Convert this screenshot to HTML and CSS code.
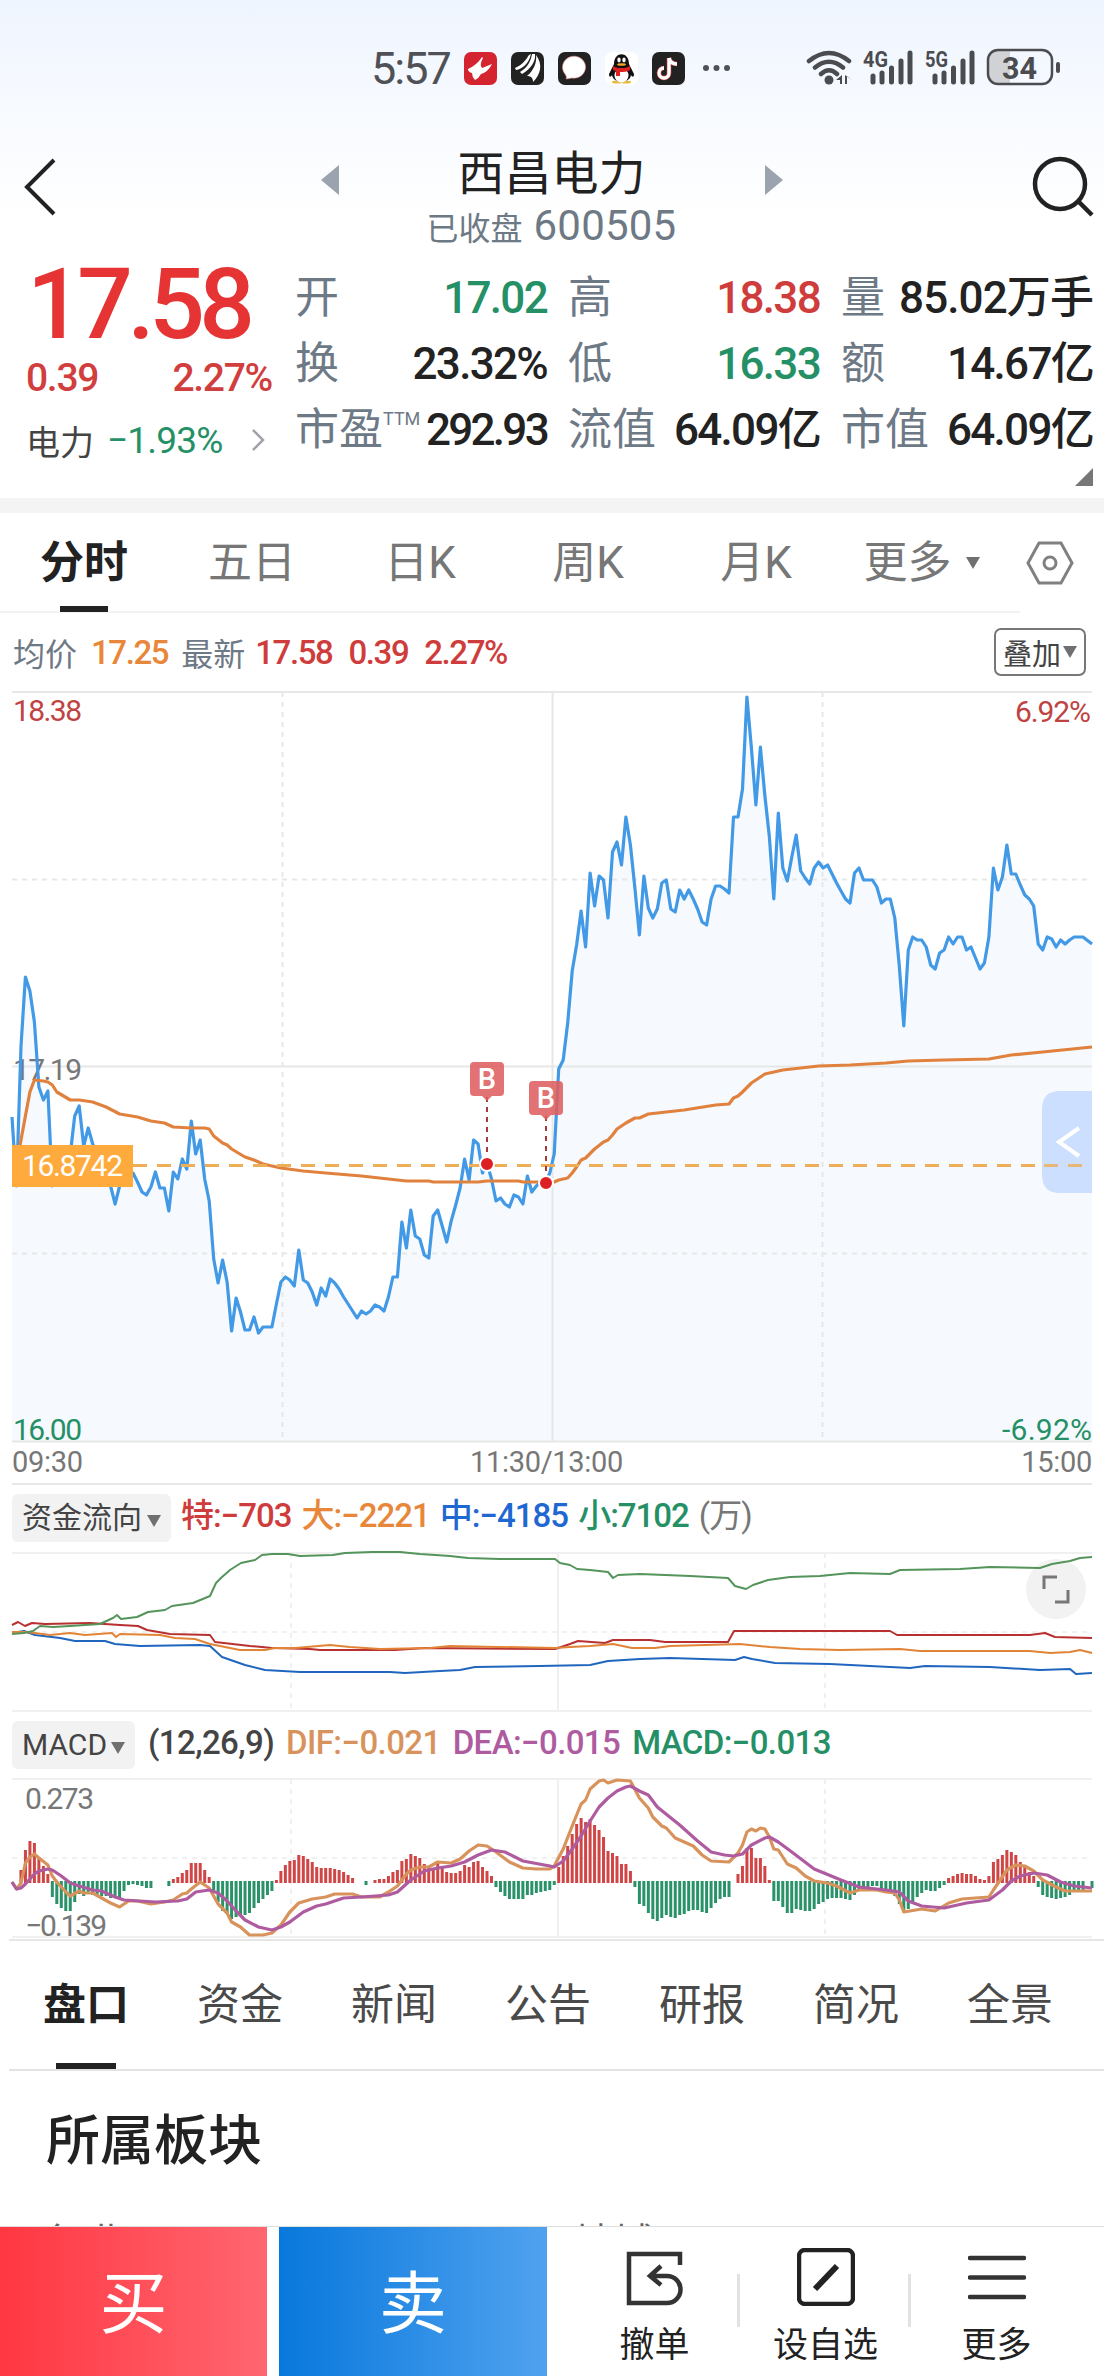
FILE: index.html
```html
<!DOCTYPE html>
<html lang="zh-CN">
<head>
  <meta charset="UTF-8">
  <title>西昌电力 600505</title>
  <link rel="stylesheet" href="styles.css">
</head>
<body>

  <div class="page">
    <div class="top">
      <div class="status-bar">
        <span class="time">5:57</span>
        <div class="apps">
          <svg width="33" height="33" viewBox="0 0 33 33"><rect width="33" height="33" rx="7" fill="#d3242f"/><path d="M4 17Q13 13 18 5L19 6Q15 13 18 16L28 12Q24 20 17 22Q15 26 11 28Q8 25 8 21Q4 20 4 17Z" fill="#fff"/></svg>
          <svg width="33" height="33" viewBox="0 0 33 33"><rect width="33" height="33" rx="7" fill="#222"/><path d="M4 16C11 13 15 8 18 3L20 2C18 11 12 17 5 18ZM9 20C16 16 20 9 21 2L24 2C25 9 20 17 11 22ZM16 24C23 18 26 10 25 3C32 12 30 22 22 30C22 26 20 24 16 24Z" fill="#fff"/></svg>
          <svg width="33" height="33" viewBox="0 0 33 33"><rect width="33" height="33" rx="7" fill="#222"/><path d="M8 27c1-2 0-3-1-5a11.500 11 0 1 1 7 4z" fill="#fff" stroke="#e88" stroke-width=".6"/></svg>
          <svg width="33" height="33" viewBox="0 0 33 33"><rect width="33" height="33" rx="7" fill="#fff"/><ellipse cx="12" cy="30" rx="5" ry="1.500" fill="#e8b93a"/><ellipse cx="21" cy="30" rx="5" ry="1.500" fill="#e8b93a"/><path d="M9 12C9-1 24-1 24 12L29 22C29 26 27 25 26 23C25 32 8 32 7 23C6 25 4 26 4 22Z" fill="#111"/><ellipse cx="16.500" cy="23.500" rx="7" ry="7" fill="#fff"/><path d="M8 14c5 3 12 3 17 0v4c-3 2-7 2-10 2v4h-4v-5l-3-1z" fill="#e02020"/><ellipse cx="14" cy="8" rx="1.700" ry="2.400" fill="#fff"/><ellipse cx="19" cy="8" rx="1.700" ry="2.400" fill="#fff"/><ellipse cx="16.500" cy="12.500" rx="4.500" ry="1.300" fill="#f5a623"/></svg>
          <svg width="33" height="33" viewBox="0 0 33 33"><rect width="33" height="33" rx="7" fill="#222"/><path d="M17 6v15a5 5 0 1 1-5-5M17 6c1 4 4 6 8 6" fill="none" stroke="#e05050" stroke-width="4.500"/><path d="M17 6v15a5 5 0 1 1-5-5M17 6c1 4 4 6 8 6" fill="none" stroke="#fff" stroke-width="3.300"/></svg>
          <svg class="dots" width="28" height="6" viewBox="0 0 28 6"><circle cx="3" cy="3" r="3"/><circle cx="13.500" cy="3" r="3"/><circle cx="24" cy="3" r="3"/></svg>
        </div>
        <svg class="signals" width="256" height="40" viewBox="804 48 256 40">
          <g fill="none" stroke="#4b4c50" stroke-width="4.500" stroke-linecap="round">
            <path d="M809 61Q829 45 849 61M815 67.500Q829 56 843 67.500M821 74Q829 66.500 837 74"/>
            <path stroke-width="5" d="M873 76v6M882 73v9M891.500 68v14M901 61v21M910 53v29M935 76v6M944 73v9M953.500 68v14M963 61v21M972 53v29"/>
          </g>
          <circle cx="829" cy="80" r="4.500" fill="#4b4c50"/>
          <path d="M836 80l6-5v9h-2v-4zM852 80l-5-4v8h-2v-9z" fill="#4b4c50"/>
          <text x="863" y="67" class="net" textLength="25" lengthAdjust="spacingAndGlyphs">4G</text>
          <text x="925" y="67" class="net" textLength="23" lengthAdjust="spacingAndGlyphs">5G</text>
          <path d="M1010 50h-12q-9 0-9 9v15q0 9 9 9h12z" fill="#d0d2d6"/>
          <rect x="988" y="50" width="64" height="34" rx="10" fill="none" stroke="#4b4c50" stroke-width="2.500"/>
          <rect x="1056" y="62" width="4" height="11" rx="2" fill="#4b4c50"/>
          <text x="1002" y="79" class="battery" textLength="35" lengthAdjust="spacingAndGlyphs">34</text>
        </svg>
      </div>

      <div class="header">
        <svg class="back" width="34" height="60" viewBox="0 0 34 60"><path d="M31 3 4 30l27 27"/></svg>
        <div class="stock">
          <svg width="18" height="30" viewBox="0 0 18 30"><path d="M0 15 18 0v30z"/></svg>
          <div class="stock-name">
            <h1>西昌电力</h1>
            <p>已收盘 <span>600505</span></p>
          </div>
          <svg width="18" height="30" viewBox="0 0 18 30"><path d="M18 15 0 0v30z"/></svg>
        </div>
        <svg class="search" width="62" height="62" viewBox="0 0 62 62"><circle cx="28" cy="28" r="25"/><path d="m46 45 14 14"/></svg>
      </div>
    </div>

    <div class="quote">
      <div class="price-box">
        <div class="price">17.58</div>
        <div class="change"><span>0.39</span><span>2.27%</span></div>
        <div class="sector">
          <span>电力</span><b>−1.93%</b>
          <svg width="14" height="24" viewBox="0 0 14 24"><path d="m2 2 10 10L2 22"/></svg>
        </div>
      </div>
      <div class="metrics">
        <div class="metric"><span>开</span><b class="green">17.02</b></div>
        <div class="metric"><span>高</span><b class="red">18.38</b></div>
        <div class="metric wide"><span>量</span><b>85.02万手</b></div>
        <div class="metric"><span>换</span><b>23.32%</b></div>
        <div class="metric"><span>低</span><b class="green">16.33</b></div>
        <div class="metric"><span>额</span><b>14.67亿</b></div>
        <div class="metric tight"><span>市盈<sup>TTM</sup></span><b>292.93</b></div>
        <div class="metric"><span>流值</span><b>64.09亿</b></div>
        <div class="metric"><span>市值</span><b>64.09亿</b></div>
      </div>
      <i class="corner"></i>
    </div>

    <div class="period-bar">
      <div class="periods">
        <span class="active">分时</span>
        <span>五日</span>
        <span>日K</span>
        <span>周K</span>
        <span>月K</span>
        <span>更多<i class="caret"></i></span>
      </div>
      <svg width="48" height="44" viewBox="0 0 48 44"><path d="M13 2h22l11 20-11 20H13L2 22z"/><circle cx="24" cy="22" r="6"/></svg>
    </div>

    <div class="legend">
      <span>均价</span><b class="orange">17.25</b>
      <span>最新</span><b class="red">17.58</b><b class="red">0.39</b><b class="red">2.27%</b>
      <button>叠加<i class="caret"></i></button>
    </div>

    <!-- intraday chart -->
    <svg class="main-chart" viewBox="0 0 1104 752">
      <path class="area" id="priceArea"/>
      <g class="grid">
        <path d="M12 1H1092M12 375.500H1092M12 750.500H1092M552.500 1V750"/>
        <path class="dash" d="M12 188.500H1092M12 562.500H1092M282.500 1V750M822.500 1V750"/>
      </g>
      <text class="grey" x="13" y="389" textLength="69">17.19</text>
      <polyline id="price" class="line blue"/>
      <polyline id="average" class="line orange"/>
      <path class="cost" d="M133 474.500H1092"/>
      <rect x="12" y="454" width="121" height="42" fill="#ffaa3c"/>
      <text x="22" y="485" fill="#fff" textLength="101">16.8742</text>

      <g class="trade">
        <path d="M487 406v66"/>
        <rect x="470" y="371" width="34" height="34" rx="4"/><path class="tip" d="m482 405 5 5 5-5z"/>
        <text x="487" y="398" text-anchor="middle">B</text>
        <circle cx="487" cy="473" r="7"/>
        <path d="M546 425v66"/>
        <rect x="529" y="390" width="34" height="34" rx="4"/><path class="tip" d="m541 424 5 5 5-5z"/>
        <text x="546" y="417" text-anchor="middle">B</text>
        <circle cx="546" cy="492" r="7"/>
      </g>

      <path d="M1092 400h-32q-18 0-18 18v66q0 18 18 18h32z" fill="#cddffe"/>
      <path class="cost" d="M1044 474.500H1090" opacity=".8"/>
      <path d="m1079 437-20 14 20 14" fill="none" stroke="#fff" stroke-width="4"/>

      <text class="red" x="13" y="30" textLength="69">18.38</text>
      <text class="red" x="1015" y="31" textLength="76">6.92%</text>
      <text class="green" x="13" y="749" textLength="69">16.00</text>
      <text class="green" x="1002" y="749" textLength="90">-6.92%</text>
    </svg>
    <div class="hours"><span>09:30</span><span>11:30/13:00</span><span>15:00</span></div>

    <div class="sub-head flow-head">
      <div class="pill">资金流向<i class="caret"></i></div>
      <b class="red">特:−703</b>
      <b class="orange">大:−2221</b>
      <b class="blue">中:−4185</b>
      <b class="green">小:7102</b>
      <span>(万)</span>
    </div>
    <svg class="sub-chart" viewBox="0 -2 1104 162">
      <circle cx="1056" cy="36" r="30" fill="#f2f2f2"/>
      <g class="grid light">
        <path d="M12 0H1092M12 158H1092M558 0V158"/>
        <path class="dash" d="M12 79H1092M291 0V158M825 0V158"/>
      </g>
      <polyline class="thin" stroke="#2166be" points="12,80 24,78 35,82 60,85 75,88 105,88 115,91 140,93 200,92 210,93 222,104 245,112 265,117 300,119 390,119 405,120 440,118 460,117 475,114 540,113 590,112 608,108 640,106 670,105 735,107 744,104 752,106 775,110 830,111 870,113 910,115 925,113 990,114 1040,117 1070,116 1076,121 1092,120"/>
      <polyline class="thin" stroke="#b93030" points="12,72 18,69 25,73 32,70 45,71 90,70 120,72 138,73 147,77 170,81 210,82 215,89 250,93 272,95 310,96 320,97 395,97 425,95 555,96 570,91 578,88 605,90 613,87 650,87 665,89 728,89 734,78 890,78 897,82 1030,82 1045,80 1055,84 1092,85"/>
      <polyline class="thin" stroke="#e28437" points="12,79 25,79 35,80 50,82 70,80 85,82 112,80 116,84 120,81 160,82 175,85 195,86 210,91 240,97 265,97 275,95 295,95 330,92 350,94 380,96 430,95 450,93 555,95 570,94 590,93 613,91 632,95 655,95 670,93 740,91 770,94 800,96 840,97 900,96 920,98 980,98 1030,98 1050,100 1070,99 1080,97 1092,100"/>
      <polyline class="thin" stroke="#55945b" points="12,81 24,80 33,78 40,73 53,74 70,73 100,71 113,65 117,62 121,66 137,64 148,59 165,57 172,53 193,50 210,43 216,30 222,24 230,17 241,10 255,7 262,2 272,1 288,1 300,3 333,2 345,0 372,-1 400,-1 420,1 450,3 468,5 500,6 555,6 560,10 570,12 577,16 590,17 608,19 613,25 618,22 640,21 690,23 728,25 735,33 746,36 753,32 768,27 790,24 820,23 850,20 890,21 900,17 960,16 990,14 1040,15 1052,11 1070,8 1080,5 1092,4"/>
      <path d="M1044 36V24h13M1068 37v12h-13" fill="none" stroke="#777" stroke-width="3"/>
    </svg>

    <div class="sub-head macd-head">
      <div class="pill">MACD<i class="caret"></i></div>
      <b class="dark">(12,26,9)</b>
      <b class="dif">DIF:−0.021</b>
      <b class="dea">DEA:−0.015</b>
      <b class="green">MACD:−0.013</b>
    </div>
    <svg class="sub-chart" viewBox="0 -2 1104 162">
      <g class="grid light">
        <path d="M12 0H1092M12 158H1092M558 0V158"/>
        <path class="dash" d="M12 79H1092M291 0V158M825 0V158"/>
      </g>
      <g id="bars"></g>
      <polyline id="dif" class="line dif"/>
      <polyline id="dea" class="line dea"/>
      <text class="grey" x="25" y="30" textLength="69">0.273</text>
      <text class="grey" x="25" y="157" textLength="82">−0.139</text>
    </svg>

    <div class="info-tabs">
      <span class="active">盘口</span>
      <span>资金</span>
      <span>新闻</span>
      <span>公告</span>
      <span>研报</span>
      <span>简况</span>
      <span>全景</span>
    </div>

    <div class="board">
      <h2>所属板块</h2>
      <div class="board-row"><span>行业</span><span>地域</span></div>
    </div>

    <div class="bottom-bar">
      <div class="buy">买</div>
      <div class="sell">卖</div>
      <div class="actions">
        <div class="action">
          <svg width="58" height="58" viewBox="0 0 58 58" stroke="#333"><path d="M54 17V6H3v49h38a13.500 13.500 0 0 0 0-27H24M35 18 24 28l11 9"/></svg>
          <span>撤单</span>
        </div>
        <div class="action">
          <svg width="58" height="58" viewBox="0 0 58 58" stroke="#222"><rect x="2" y="2" width="54" height="54" rx="6"/><path d="m18 41 22-23" stroke-width="6"/></svg>
          <span>设自选</span>
        </div>
        <div class="action">
          <svg width="58" height="58" viewBox="0 0 58 58" stroke="#333"><path stroke-linecap="round" d="M2 10h54M2 29.500h54M2 49h54"/></svg>
          <span>更多</span>
        </div>
      </div>
    </div>
  </div>

  <script src="script.js"></script>
</body>
</html>
```

FILE: styles.css
```css
* {
  box-sizing: border-box;
  margin: 0;
  padding: 0;
}

body {
  font-family: Roboto, "Noto Sans CJK SC", sans-serif;
  background: #fff;
  color: #222;
}

.page {
  width: 1104px;
  height: 2376px;
  overflow: hidden;
  display: flex;
  flex-direction: column;
}

.page > * {
  flex-shrink: 0;
}

svg {
  display: block;
}

i {
  font-style: normal;
}

b {
  font-weight: 500;
}

.red { color: #cf3c3c; }
.green { color: #259066; }
.orange { color: #e8873a; }
.blue { color: #1f68d2; }
.dark { color: #444; }
.dif { color: #d8935c; }
.dea { color: #ae5ba0; }

.caret {
  display: inline-block;
  border: 7px solid transparent;
  border-top: 12px solid #707070;
  border-bottom: 0;
}

/* status bar + header */
.top {
  height: 256px;
  background: linear-gradient(#eff5ff, #fff 85%);
}

.status-bar {
  display: flex;
  align-items: center;
  height: 136px;
  padding: 0 44px 0 371px;
}

.time {
  width: 93px;
  font-size: 45px;
  letter-spacing: -2px;
  color: #505156;
}

.apps {
  display: flex;
  align-items: center;
  gap: 14px;
}

.dots {
  margin-left: 4px;
  fill: #505156;
}

.signals {
  margin-left: auto;
}

.net {
  font-size: 22px;
  font-weight: 700;
  fill: #4b4c50;
}

.battery {
  font-size: 32px;
  font-weight: 700;
  fill: #4b4c50;
}

.header {
  display: flex;
  justify-content: space-between;
  align-items: flex-start;
  padding: 7px 10px 0 23px;
}

.back {
  margin-top: 14px;
  fill: none;
  stroke: #222;
  stroke-width: 4;
}

.search {
  margin-top: 13px;
  fill: none;
  stroke: #222;
  stroke-width: 4.500;
}

.stock {
  display: flex;
  justify-content: space-between;
  width: 462px;
  margin-left: 14px;
}

.stock > svg {
  margin-top: 22px;
  fill: #9ba3ae;
}

.stock-name {
  text-align: center;
}

.stock-name h1 {
  height: 58px;
  font-size: 47px;
  font-weight: 400;
  line-height: 62px;
}

.stock-name p {
  font-size: 32px;
  line-height: 50px;
  color: #6e7986;
}

.stock-name p span {
  margin-left: 3px;
  font-size: 42px;
  letter-spacing: .200px;
}

/* quote */
.quote {
  position: relative;
  display: flex;
  height: 257px;
  padding: 0 11px 0 26px;
  border-bottom: 15px solid #f4f4f4;
}

.price-box {
  width: 270px;
}

.price {
  height: 94px;
  padding-left: 1px;
  font-size: 98px;
  font-weight: 500;
  line-height: 98px;
  letter-spacing: -5.500px;
  color: #e63434;
}

.change {
  display: flex;
  justify-content: space-between;
  width: 246px;
  font-size: 39px;
  font-weight: 500;
  line-height: 56px;
  letter-spacing: -1.300px;
  color: #d13e3e;
}

.sector {
  display: flex;
  align-items: center;
  height: 68px;
  font-size: 34px;
  color: #444;
}

.sector b {
  margin: 0 auto 0 13px;
  font-size: 37px;
  font-weight: 400;
  letter-spacing: -.800px;
  color: #259066;
}

.sector svg {
  margin-right: 30px;
  fill: none;
  stroke: #a0a4aa;
  stroke-width: 2.500;
}

.metrics {
  display: grid;
  grid-template-columns: repeat(3, 252px);
  grid-auto-rows: 66px;
  column-gap: 21px;
  padding-top: 9px;
}

.metric {
  display: flex;
  justify-content: space-between;
  font-size: 44px;
  line-height: 66px;
  white-space: nowrap;
}

.metric span {
  color: #6e7986;
}

.metric b {
  letter-spacing: -1.700px;
}

.metric.wide b {
  letter-spacing: -.900px;
}

.metric.tight b {
  letter-spacing: -2.700px;
}

.metric sup {
  display: inline-block;
  width: 35px;
  font-size: 18px;
  line-height: 1;
  vertical-align: 20px;
}

.corner {
  position: absolute;
  right: 11px;
  bottom: 12px;
  border-left: 18px solid transparent;
  border-bottom: 18px solid #777;
}

/* period tabs */
.period-bar {
  display: flex;
  align-items: center;
  height: 100px;
}

.periods {
  display: flex;
  width: 1020px;
  height: 100px;
  margin-right: 6px;
  border-bottom: 2px solid #f2f2f2;
}

.periods span {
  width: 168px;
  font-size: 44px;
  line-height: 101px;
  text-align: center;
  white-space: nowrap;
  color: #777;
}

.periods .active,
.info-tabs .active {
  font-weight: 700;
  color: #222;
}

.periods .active::after,
.info-tabs .active::after {
  content: "";
  display: block;
  width: 48px;
  height: 6px;
  margin: -8px auto 0;
  background: #222;
}

.periods .caret {
  margin: 0 5px 0 14px;
  vertical-align: 9px;
}

.period-bar svg {
  fill: none;
  stroke: #808080;
  stroke-width: 3;
}

.legend {
  display: flex;
  align-items: center;
  height: 78px;
  padding: 0 18px 0 13px;
  font-size: 32px;
}

.legend span {
  width: 66px;
  margin-right: 12px;
  color: #6e7986;
}

.legend b {
  font-size: 33px;
  letter-spacing: -1.400px;
  margin-right: 16px;
}

.legend .orange {
  margin-right: 13px;
}

.legend span:nth-of-type(2) {
  margin-right: 8px;
}

.legend button {
  display: flex;
  align-items: center;
  width: 92px;
  height: 48px;
  margin-left: auto;
  padding-left: 7px;
  font: 29px/44px "Noto Sans CJK SC", sans-serif;
  white-space: nowrap;
  color: #444;
  background: #fff;
  border: 2px solid #777;
  border-radius: 7px;
}

.legend .caret {
  margin-left: 2px;
}

/* charts */
.main-chart,
.sub-chart {
  width: 1104px;
  height: 752px;
  overflow: visible;
}

.sub-chart {
  height: 162px;
}

.main-chart text,
.sub-chart text {
  font-size: 30px;
}

text.red { fill: #c04343; }
text.green { fill: #259066; }
text.grey { fill: #777; }

.grid path {
  fill: none;
  stroke: #e6e8e6;
  stroke-width: 2;
}

.grid.light path {
  stroke: #f0f0f0;
}

.grid .dash {
  stroke-dasharray: 5 5;
}

.area {
  fill: #f6faff;
}

.line {
  fill: none;
  stroke: currentColor;
  stroke-width: 3.200;
  stroke-linejoin: round;
}

.line.blue { color: #4299e6; }
.line.orange { color: #e0823e; }

.thin {
  fill: none;
  stroke-width: 2;
  stroke-linejoin: round;
}

.cost {
  stroke: #edae56;
  stroke-width: 3;
  stroke-dasharray: 14 10;
}

.trade > path {
  stroke: #a33b3b;
  stroke-width: 2;
  stroke-dasharray: 5 5;
}

.trade rect,
.trade .tip {
  fill: #de5e60;
  fill-opacity: .88;
  stroke: none;
}

.trade text {
  font-size: 29px;
  font-weight: 500;
  fill: #fff;
}

.trade circle {
  fill: #dc2024;
  stroke: #fff;
  stroke-width: 2;
}

.hours {
  display: grid;
  grid-template-columns: 1fr 1fr 1fr;
  height: 42px;
  margin: 0 12px;
  font-size: 29px;
  line-height: 39px;
  letter-spacing: -.300px;
  color: #777;
  border-bottom: 2px solid #e8e8e8;
}

.hours span:nth-child(2) { text-align: center; padding-right: 11px; }
.hours span:nth-child(3) { text-align: right; }

.sub-head {
  display: flex;
  align-items: center;
  height: 66px;
  padding-left: 12px;
  font-size: 33px;
  line-height: 44px;
  white-space: nowrap;
}

.flow-head {
  gap: 10px;
  letter-spacing: -1px;
}

.flow-head span {
  color: #777;
}

.flow-head b,
.flow-head span,
.macd-head b {
  margin-top: -4px;
}

.pill {
  display: flex;
  align-items: center;
  justify-content: space-between;
  width: 159px;
  height: 48px;
  padding: 0 10px;
  font-size: 30px;
  letter-spacing: 0;
  color: #444;
  background: #f2f2f2;
  border-radius: 6px;
}

.pill .caret {
  margin-top: 5px;
}

.macd-head {
  gap: 12px;
  height: 64px;
  letter-spacing: -.600px;
}

.macd-head .pill {
  width: 123px;
  margin-right: 1px;
}

.info-tabs {
  display: flex;
  height: 132px;
  margin-left: 9px;
  border-top: 2px solid #e6e6e6;
  border-bottom: 2px solid #e3e3e3;
}

.info-tabs span {
  width: 154px;
  font-size: 43px;
  line-height: 128px;
  text-align: center;
  color: #4a4a4a;
}

.info-tabs .active::after {
  width: 60px;
  margin-top: -6px;
}

.board {
  height: 155px;
  padding-left: 46px;
  overflow: hidden;
}

.board h2 {
  height: 146px;
  font-size: 54px;
  font-weight: 500;
  line-height: 142px;
}

.board-row {
  display: flex;
  font-size: 40px;
  line-height: 54px;
  color: #666;
}

.board-row span {
  width: 528px;
}

/* bottom bar */
.bottom-bar {
  display: flex;
  height: 150px;
  background: #fff;
  border-top: 1px solid #ddd;
}

.buy,
.sell {
  width: 267px;
  margin-right: 12px;
  font-size: 68px;
  line-height: 156px;
  text-align: center;
  color: #fff;
  background: linear-gradient(90deg, #ff3742, #ff6670);
}

.sell {
  width: 268px;
  margin-right: 22px;
  background: linear-gradient(90deg, #0878dc, #50a2ef);
}

.actions {
  display: flex;
}

.action {
  display: flex;
  flex-direction: column;
  align-items: center;
  width: 171px;
  padding-top: 21px;
  font-size: 35px;
  line-height: 80px;
  background: linear-gradient(#e2e2e2, #e2e2e2) right 47px / 3px 53px no-repeat;
}

.action:last-child {
  background: none;
}

.action svg {
  flex-shrink: 0;
  fill: none;
  stroke-width: 4.500;
}
```

FILE: script.js
```javascript
// one trading day, one point per minute
const STEP = 1080 / 241;
const LEFT = 12;

// [minute, y] pairs, written flat
const price = [
  0,426, 1,495, 2,355, 3,286, 4,300, 5,331, 6,396, 7,409, 8,400, 9,495, 11,478, 13,463, 14,425, 15,415, 16,455, 17,437,
  18,453, 20,470, 22,495, 23,513, 24,495, 25,481, 27,482, 28,491, 29,501, 30,504, 31,496, 32,481, 33,497, 34,497, 35,520,
  36,481, 37,488, 38,468, 39,478, 40,430, 41,463, 42,449, 43,488, 44,510, 45,568, 46,592, 47,569, 48,591, 49,640, 50,607,
  51,621, 52,639, 53,639, 54,626, 55,642, 56,636, 58,636, 59,613, 60,591, 61,586, 62,589, 63,595, 64,559, 65,589, 66,592,
  67,601, 68,614, 69,597, 70,605, 71,588, 72,592, 73,598, 74,606, 75,613, 76,620, 77,627, 78,620, 79,623, 80,620, 81,614,
  82,616, 83,620, 84,606, 85,586, 86,586, 87,531, 88,557, 89,519, 90,545, 91,548, 92,564, 93,567, 94,525, 95,519, 96,535,
  97,551, 98,530, 99,514, 100,497, 101,468, 102,489, 103,449, 104,453, 105,482, 106,472, 107,488, 108,510, 109,507,
  110,513, 111,516, 112,504, 113,506, 114,513, 115,485, 116,501, 117,495, 118,491, 119,491, 120,482, 121,463, 122,378,
  123,369, 124,332, 125,280, 126,254, 127,220, 128,256, 129,182, 130,215, 131,185, 132,189, 133,227, 134,161, 135,151,
  136,174, 137,126, 138,154, 139,197, 140,244, 141,185, 142,217, 143,227, 144,218, 145,192, 146,189, 147,218, 148,221,
  149,199, 150,208, 151,199, 152,208, 153,218, 154,231, 155,234, 156,208, 157,195, 158,195, 159,198, 160,202, 161,126,
  162,126, 163,98, 164,6, 165,57, 166,114, 167,56, 168,105, 169,145, 170,208, 171,122, 172,177, 173,190, 174,166,
  175,144, 176,180, 177,187, 178,193, 179,177, 180,171, 181,177, 182,174, 183,183, 184,192, 185,200, 186,208, 187,212,
  188,182, 189,177, 190,189, 192,189, 193,196, 194,212, 195,208, 196,208, 197,227, 198,275, 199,335, 200,259, 201,246,
  202,249, 203,249, 204,256, 205,274, 206,278, 207,262, 208,259, 209,246, 210,253, 211,246, 212,246, 213,259, 214,256,
  215,267, 216,278, 217,272, 218,246, 219,177, 220,199, 221,186, 222,154, 223,183, 224,183, 225,194, 226,204, 227,208,
  228,215, 229,253, 230,259, 231,246, 232,248, 233,256, 234,249, 235,253, 236,249, 237,246, 239,246, 241,253
];

const average = [
  1,475, 2,449, 3,425, 4,401, 5,389, 7,390, 8,391, 9,394, 10,401, 13,409, 15,409, 18,411, 21,416, 24,423, 28,426, 31,430,
  34,432, 36,436, 40,437, 43,437, 44,438, 45,445, 47,452, 48,454, 49,458, 52,466, 54,469, 56,473, 60,477, 65,480, 70,482,
  78,485, 86,489, 88,490, 93,490, 94,491, 104,491, 106,490, 113,490, 114,491, 121,491, 122,489, 124,487, 125,482,
  126,476, 127,469, 128,467, 130,458, 132,451, 133,449, 134,444, 135,438, 137,432, 139,427, 140,427, 142,423, 150,419,
  157,414, 160,413, 161,407, 162,405, 163,401, 165,392, 168,383, 172,379, 180,375, 187,374, 195,372, 200,370, 208,369,
  218,368, 223,364, 230,361, 241,356
];

const dif = [
  0,103, 1,110, 2,104, 3,84, 4,78, 5,75, 6,79, 8,86, 9,97, 10,103, 12,113, 13,117, 15,112, 16,114, 18,114, 20,119,
  22,124, 24,128, 26,122, 28,122, 31,125, 34,123, 36,121, 38,115, 39,114, 40,110, 42,103, 44,109, 46,125, 48,134, 49,143,
  51,148, 53,156, 56,156, 58,154, 60,146, 62,133, 64,124, 67,120, 70,118, 72,115, 76,115, 78,118, 82,118, 84,113,
  86,107, 88,95, 89,91, 91,88, 93,88, 95,83, 98,84, 100,80, 102,72, 104,66, 106,67, 108,73, 111,83, 114,89, 117,90,
  120,90, 121,87, 123,70, 125,47, 127,25, 128,21, 129,10, 131,2, 132,1, 133,4, 135,1, 138,2, 140,19, 142,29, 143,38,
  145,47, 146,49, 148,59, 152,67, 154,76, 156,82, 160,83, 162,74, 163,66, 164,53, 165,50, 166,52, 167,49, 168,50, 169,58,
  170,70, 171,71, 173,85, 175,89, 177,97, 179,102, 182,104, 184,107, 187,114, 189,111, 193,111, 195,113, 197,114,
  198,121, 199,133, 203,130, 206,132, 209,124, 212,120, 218,118, 219,111, 222,91, 224,86, 226,87, 228,92, 230,101,
  233,108, 235,112, 241,112
];

const dea = [
  0,103, 1,110, 2,109, 3,105, 4,100, 5,95, 6,92, 8,90, 9,91, 11,97, 13,104, 15,107, 18,111, 20,112, 23,118, 25,121,
  32,123, 37,122, 39,120, 41,113, 44,111, 46,114, 48,122, 50,132, 52,141, 55,148, 58,151, 60,148, 62,143, 65,133, 68,127,
  70,125, 74,119, 78,118, 84,116, 86,113, 89,101, 92,92, 95,89, 98,87, 101,83, 104,76, 107,71, 110,73, 114,82, 120,87,
  121,88, 123,82, 125,70, 127,57, 129,42, 131,28, 133,19, 135,12, 137,8, 138,7, 140,12, 142,16, 144,28, 149,46, 153,62,
  156,73, 159,76, 161,77, 163,75, 165,66, 168,59, 169,58, 171,63, 174,73, 179,90, 185,101, 189,108, 195,111, 198,113,
  200,122, 203,127, 208,129, 213,124, 218,121, 221,111, 223,102, 225,97, 228,94, 231,96, 234,103, 237,107, 241,109
];

// histogram, one value per minute
const macd = [
  0, 0, 12, 32, 41, 39, 25, 16, 8, -15, -22, -26, -29, -29, -20, -12, -14, -12, -13, -14, -14, -14, -16, -16, -16, -9, -3,
  -2, -3, -4, -6, -6, 0, 0, 0, -4, 3, 5, 9, 12, 19, 19, 19, 12, 5, -8, -20, -29, -32, -37, -35, -33, -33, -31, -26, -21,
  -17, -13, -9, 2, 11, 17, 21, 22, 27, 26, 23, 20, 15, 14, 14, 14, 13, 12, 10, 7, 4, 0, 0, -3, 0, 2, 3, 3, 6, 10, 12, 21,
  23, 28, 26, 24, 18, 15, 13, 19, 16, 10, 9, 9, 11, 17, 15, 20, 21, 15, 11, 6, -5, -10, -14, -17, -17, -17, -17, -13, -13,
  -11, -10, -9, -8, -3, 15, 26, 36, 48, 58, 64, 60, 63, 57, 52, 45, 31, 29, 26, 18, 18, 11, -5, -22, -24, -31, -37, -39,
  -36, -33, -35, -36, -33, -32, -29, -28, -28, -30, -31, -26, -21, -17, -15, -15, 0, 8, 16, 34, 34, 24, 24, 16, 2, -19,
  -19, -25, -31, -31, -27, -28, -29, -29, -27, -22, -20, -17, -16, -16, -16, -17, -18, -13, -8, -7, -6, -4, -4, -8, -10,
  -11, -14, -22, -29, -27, -20, -15, -11, -8, -9, -9, -6, -3, 4, 6, 8, 9, 8, 8, 6, 3, 2, 6, 20, 23, 27, 32, 30, 27, 20,
  15, 10, 6, -5, -13, -15, -16, -17, -16, -15, -13, -10, -8, -8, 0, -6
];

function toPoints(data) {
  const points = [];
  for (let i = 0; i < data.length; i += 2) {
    points.push((LEFT + data[i] * STEP).toFixed(1) + ',' + data[i + 1]);
  }
  return points.join(' ');
}

document.getElementById('price').setAttribute('points', toPoints(price));
document.getElementById('average').setAttribute('points', toPoints(average));
document.getElementById('dif').setAttribute('points', toPoints(dif));
document.getElementById('dea').setAttribute('points', toPoints(dea));
document.getElementById('priceArea').setAttribute('d', 'M12,750 L' + toPoints(price) + ' L1092,750 Z');

const ZERO = 103;
const bars = document.getElementById('bars');
macd.forEach((value, minute) => {
  if (!value) return;
  const bar = document.createElementNS('http://www.w3.org/2000/svg', 'rect');
  bar.setAttribute('x', LEFT + minute * STEP - 1.5);
  bar.setAttribute('y', value > 0 ? ZERO - value : ZERO - 1);
  bar.setAttribute('width', 3);
  bar.setAttribute('height', Math.abs(value) + 1);
  bar.setAttribute('fill', value > 0 ? '#d04545' : '#2a9269');
  bars.appendChild(bar);
});
```
